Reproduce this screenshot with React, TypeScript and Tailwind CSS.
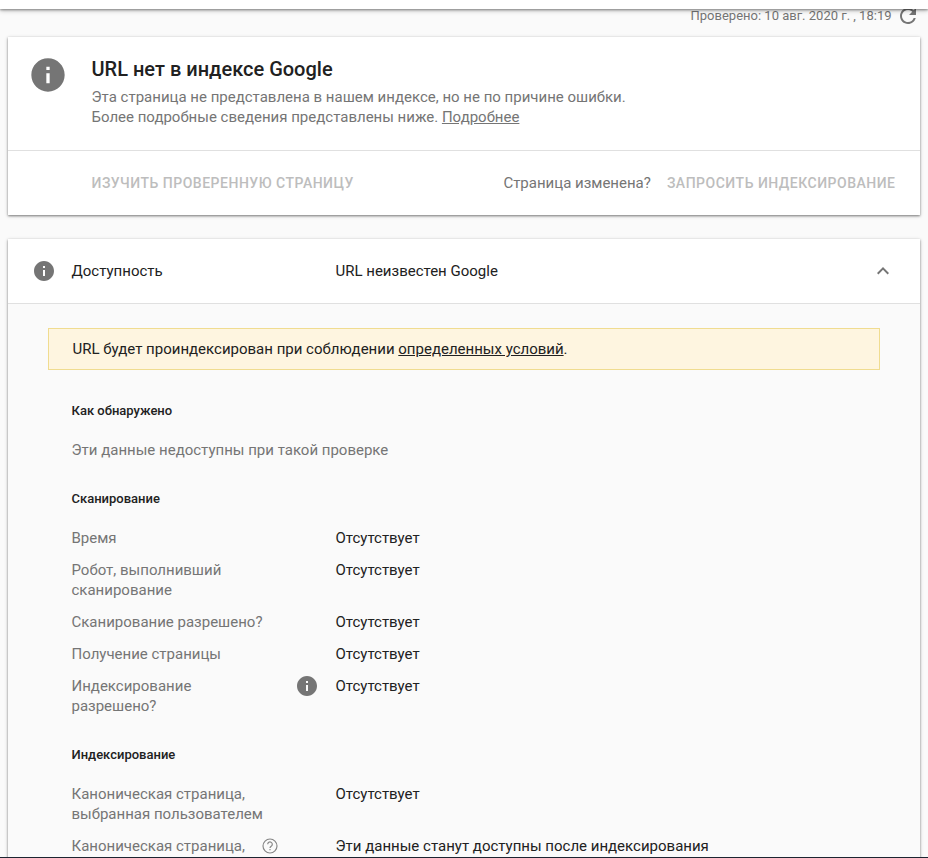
import React from "react";

type IconProps = { className?: string };

function Info({ className = "" }: IconProps) {
  return (
    <svg viewBox="0 0 24 24" className={`fill-[#757575] ${className}`}>
      <path d="M12 2C6.48 2 2 6.48 2 12s4.48 10 10 10 10-4.48 10-10S17.52 2 12 2zm1 15h-2v-6h2v6zm0-8h-2V7h2v2z" />
    </svg>
  );
}

function Row({ label, value = "Отсутствует", info, help }: { label: string[]; value?: string; info?: boolean; help?: boolean }) {
  return (
    <div className="flex pb-3">
      <div className="flex w-[264px] shrink-0 justify-between text-[#757575]">
        <div className="whitespace-nowrap">
          {label.map((l) => (
            <div key={l}>{l}</div>
          ))}
        </div>
        {info && <Info className="mr-[16.5px] -mt-0.5 size-6" />}
        {help && (
          <svg viewBox="0 0 18 18" fill="none" stroke="#858585" strokeWidth="1.15" className="mr-[56.5px] mt-[1px] size-[18px]">
            <circle cx="9" cy="9" r="7" />
            <path d="M6.7 7.3a2.3 2.3 0 1 1 3.7 1.8C9.5 9.8 9 10.1 9 11" />
            <path d="M9 12v1.3" />
          </svg>
        )}
      </div>
      <div className="whitespace-nowrap">{value}</div>
    </div>
  );
}

function Heading({ children }: { children: React.ReactNode }) {
  return <h3 className="text-[13px] font-medium leading-5">{children}</h3>;
}

export default function App() {
  return (
    <div className="relative h-[858px] w-[928px] overflow-hidden bg-[#fafafa] font-[Roboto,sans-serif] text-[15px] leading-5 text-[#212121]">
      <header className="relative z-10 h-[9px] bg-white shadow-[0_1px_2px_rgba(0,0,0,0.3),0_1px_5px_rgba(0,0,0,0.35)]" />
      <div className="flex h-7 justify-end pr-[8.5px] text-[13px] text-[#757575]">
        <span className="-mt-[3px] whitespace-nowrap">Проверено: 10 авг. 2020 г. , 18:19</span>
        <svg viewBox="0 0 24 24" className="-mt-[5px] ml-1 size-6 fill-[#757575]">
          <path d="M17.65 6.35A7.96 7.96 0 0 0 12 4c-4.42 0-7.99 3.58-7.99 8s3.57 8 7.99 8c3.73 0 6.84-2.55 7.73-6h-2.08A5.99 5.99 0 0 1 12 18c-3.31 0-6-2.69-6-6s2.69-6 6-6c1.66 0 3.14.69 4.22 1.78L13 11h7V4l-2.35 2.35z" />
        </svg>
      </div>
      <section className="mx-2 h-[178px] bg-white shadow-[0_1px_2px_rgba(0,0,0,0.4),0_1px_4px_rgba(0,0,0,0.2)]">
        <div className="flex h-[114px] border-b border-[#e0e0e0]">
          <Info className="ml-[19.5px] mt-[18px] size-10" />
          <div className="ml-6 pt-5 text-[#757575]">
            <h1 className="text-xl font-medium leading-6 text-[#212121]">URL нет в индексе Google</h1>
            <p className="mt-[6px]">
              Эта страница не представлена в нашем индексе, но не по причине ошибки.
              <br />
              Более подробные сведения представлены ниже. <a className="underline">Подробнее</a>
            </p>
          </div>
        </div>
        <div className="flex h-16 items-center whitespace-nowrap pl-[83.5px] pr-[24.5px] pt-px text-sm font-medium text-[#bdbdbd]">
          <span className="pb-0.5 tracking-[0.5px]">ИЗУЧИТЬ ПРОВЕРЕННУЮ СТРАНИЦУ</span>
          <span className="ml-auto mr-4 text-[15px] font-normal text-[#757575]">Страница изменена?</span>
          <span className="pb-0.5 tracking-[0.5px]">ЗАПРОСИТЬ ИНДЕКСИРОВАНИЕ</span>
        </div>
      </section>
      <section className="mx-2 mt-6 h-[700px] bg-[#fafafa] shadow-[0_1px_2px_rgba(0,0,0,0.4),0_1px_4px_rgba(0,0,0,0.2)]">
        <div className="flex h-[65px] items-center border-b border-[#e0e0e0] bg-white pl-[23.5px] pr-[25px]">
          <Info className="size-6" />
          <span className="ml-4 w-[264px]">Доступность</span>
          <span>URL неизвестен Google</span>
          <svg viewBox="0 0 24 24" className="ml-auto size-6 fill-[#757575]">
            <path d="M12 8l-6 6 1.41 1.41L12 10.83l4.59 4.58L18 14z" />
          </svg>
        </div>
        <div className="mx-10 mt-6 flex h-[42px] items-center border border-[#f0dc90] bg-[#fef5e0] px-[23.5px]">
          <span>URL будет проиндексирован при соблюдении <a className="underline">определенных условий</a>.</span>
        </div>
        <div className="pl-[63.5px] pt-[31px]">
          <Heading>Как обнаружено</Heading>
          <p className="mb-[29px] mt-[19px] text-[#757575]">Эти данные недоступны при такой проверке</p>
          <Heading>Сканирование</Heading>
          <div className="mb-[17px] mt-[19px]">
            <Row label={["Время"]} />
            <Row label={["Робот, выполнивший", "сканирование"]} />
            <Row label={["Сканирование разрешено?"]} />
            <Row label={["Получение страницы"]} />
            <Row label={["Индексирование", "разрешено?"]} info />
          </div>
          <Heading>Индексирование</Heading>
          <div className="mt-[19px]">
            <Row label={["Каноническая страница,", "выбранная пользователем"]} />
            <Row label={["Каноническая страница,"]} value="Эти данные станут доступны после индексирования" help />
          </div>
        </div>
      </section>
      <div className="absolute bottom-0 left-0 h-px w-full bg-[#1c2430]" />
    </div>
  );
}
